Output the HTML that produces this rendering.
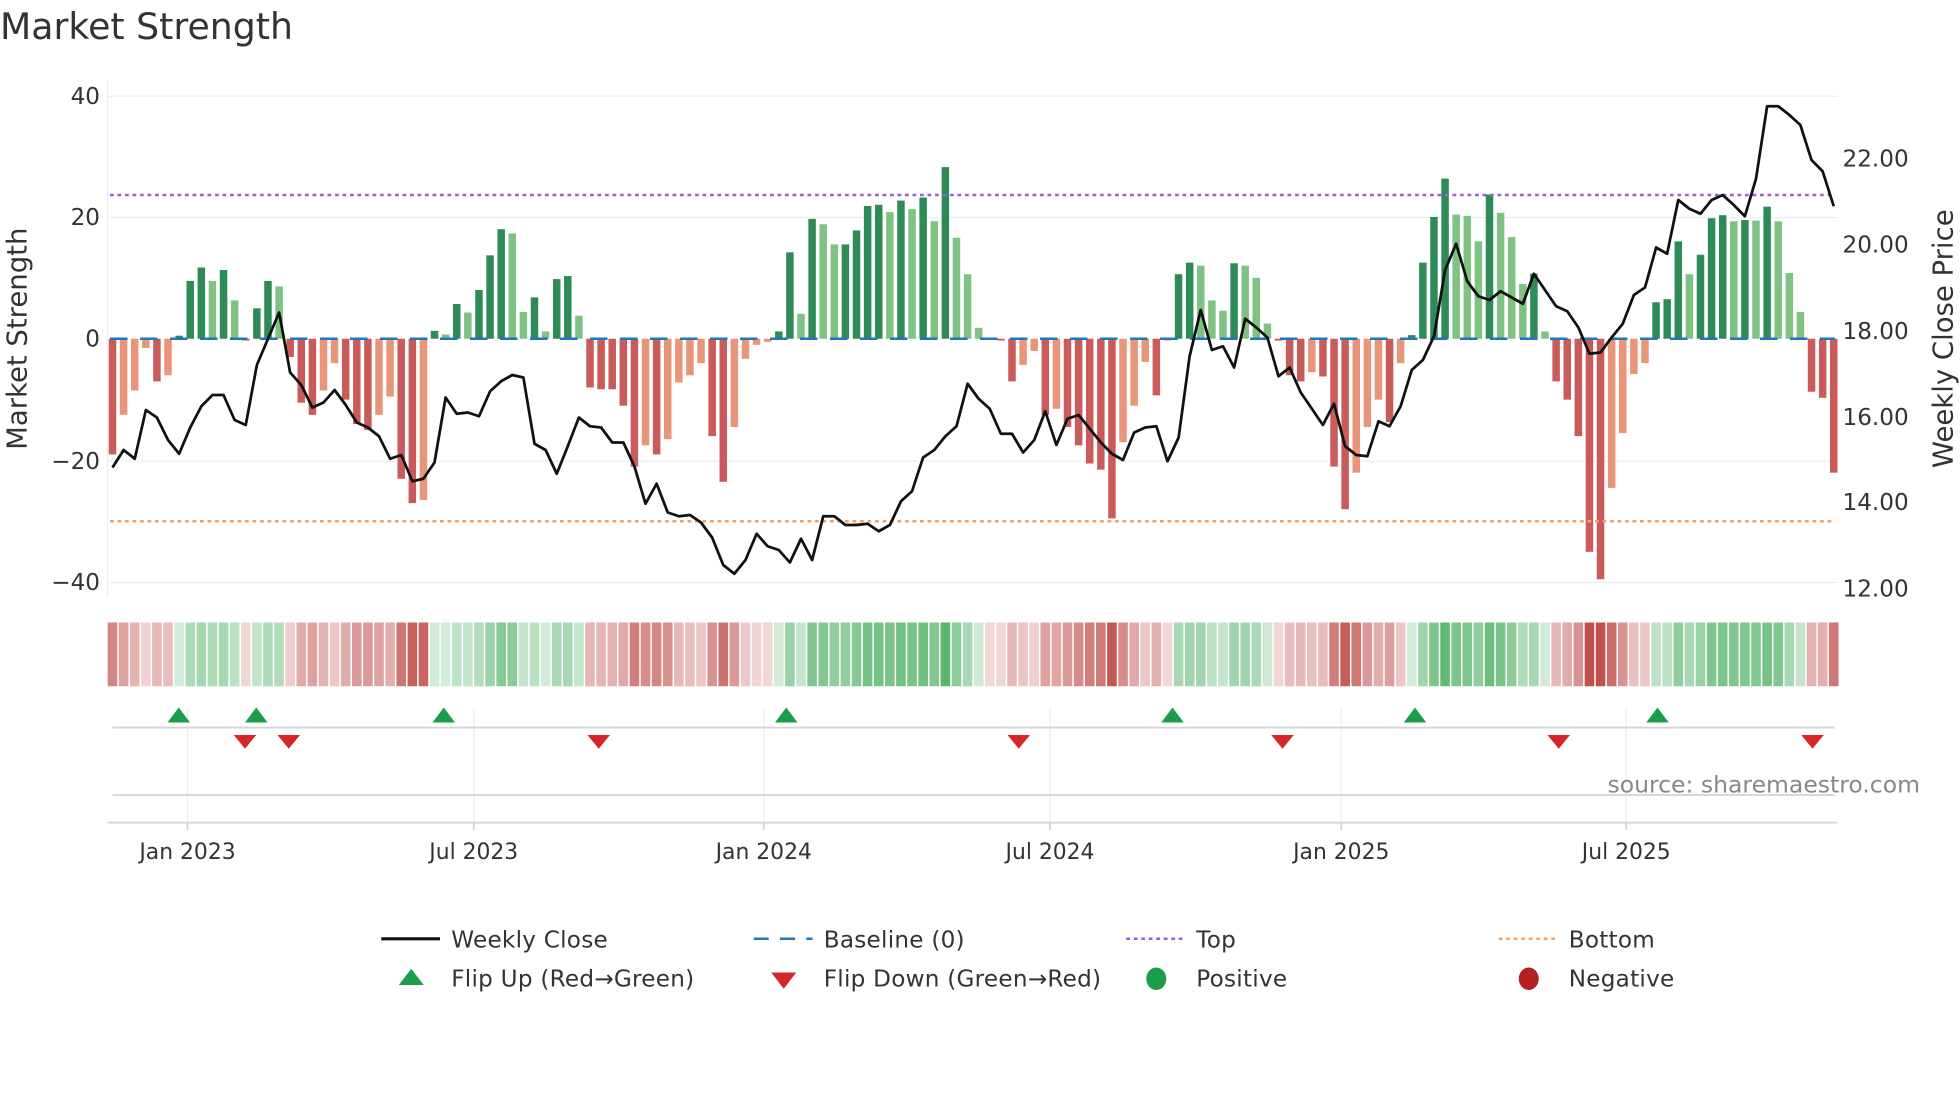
<!DOCTYPE html>
<html><head><meta charset="utf-8"><style>
html,body{margin:0;padding:0;background:#fff;}
svg{display:block;font-family:"DejaVu Sans","Liberation Sans",sans-serif;}
</style></head><body>
<svg id="s" width="1960" height="1102" viewBox="0 0 1568 881.6" xmlns="http://www.w3.org/2000/svg">
<rect width="1568" height="882" fill="#fff"/>
<text x="0" y="31" font-size="29" fill="#333">Market Strength</text>
<g stroke="#eceef2" stroke-width="1">
<line x1="86" x2="1470" y1="77" y2="77"/><line x1="86" x2="1470" y1="174" y2="174"/>
<line x1="86" x2="1470" y1="369" y2="369"/><line x1="86" x2="1470" y1="466" y2="466"/>
<line x1="86" x2="86" y1="65" y2="478"/>
</g>
<g font-size="18.5" fill="#333" text-anchor="end">
<text x="80" y="83">40</text><text x="80" y="180">20</text><text x="80" y="277">0</text>
<text x="80" y="375">−20</text><text x="80" y="472">−40</text>
</g>
<g font-size="18.5" fill="#333">
<text x="1474" y="133">22.00</text><text x="1474" y="202">20.00</text><text x="1474" y="271">18.00</text>
<text x="1474" y="340">16.00</text><text x="1474" y="408">14.00</text><text x="1474" y="477">12.00</text>
</g>
<text transform="translate(21,271) rotate(-90)" text-anchor="middle" font-size="22" fill="#333">Market Strength</text>
<text transform="translate(1562,271) rotate(-90)" text-anchor="middle" font-size="22" fill="#333">Weekly Close Price</text>
<g id="bars"></g>
<line x1="88" x2="1468" y1="271" y2="271" stroke="#1f77b4" stroke-width="2" stroke-dasharray="14,10"/>
<line x1="88" x2="1468" y1="156" y2="156" stroke="#9b5de5" stroke-width="2" stroke-dasharray="3,3"/>
<line x1="88" x2="1468" y1="417" y2="417" stroke="#f4a261" stroke-width="2" stroke-dasharray="3,3"/>
<polyline id="price" fill="none" stroke="#111" stroke-width="2.2" stroke-linejoin="round"/>
<g id="strip"></g>
<g stroke="#eceef2" stroke-width="1">
<line x1="150" x2="150" y1="566" y2="658"/><line x1="379" x2="379" y1="566" y2="658"/>
<line x1="611" x2="611" y1="566" y2="658"/><line x1="840" x2="840" y1="566" y2="658"/>
<line x1="1073" x2="1073" y1="566" y2="658"/><line x1="1301" x2="1301" y1="566" y2="658"/>
</g>
<line x1="90" x2="1468" y1="582" y2="582" stroke="#d4d6da" stroke-width="1.5"/>
<line x1="90" x2="1468" y1="636" y2="636" stroke="#d4d6da" stroke-width="1.5"/>
<line x1="86" x2="1470" y1="658" y2="658" stroke="#d4d6da" stroke-width="1.5"/>
<g stroke="#d4d6da" stroke-width="1.5">
<line x1="150" x2="150" y1="658" y2="664"/><line x1="379" x2="379" y1="658" y2="664"/>
<line x1="611" x2="611" y1="658" y2="664"/><line x1="840" x2="840" y1="658" y2="664"/>
<line x1="1073" x2="1073" y1="658" y2="664"/><line x1="1301" x2="1301" y1="658" y2="664"/>
</g>
<g id="flips"></g>
<text x="1536" y="634" text-anchor="end" font-size="18.8" fill="#888">source: sharemaestro.com</text>
<g font-size="17.5" fill="#333" text-anchor="middle">
<text x="150" y="687">Jan 2023</text><text x="379" y="687">Jul 2023</text><text x="611" y="687">Jan 2024</text>
<text x="840" y="687">Jul 2024</text><text x="1073" y="687">Jan 2025</text><text x="1301" y="687">Jul 2025</text>
</g>
<g font-size="18.5" fill="#333" letter-spacing="0.2">
<line x1="305" x2="352" y1="751" y2="751" stroke="#111" stroke-width="2.5"/>
<text x="361" y="758">Weekly Close</text>
<line x1="603" x2="650" y1="751" y2="751" stroke="#1f77b4" stroke-width="2" stroke-dasharray="12,9"/>
<text x="659" y="758">Baseline (0)</text>
<line x1="901" x2="946" y1="751" y2="751" stroke="#9b5de5" stroke-width="2" stroke-dasharray="3,3"/>
<text x="957" y="758">Top</text>
<line x1="1199" x2="1244" y1="751" y2="751" stroke="#f4a261" stroke-width="2" stroke-dasharray="3,3"/>
<text x="1255" y="758">Bottom</text>
<polygon points="319,788 329,775 339,788" fill="#1a9e4a"/>
<text x="361" y="789">Flip Up (Red→Green)</text>
<polygon points="617,778 637,778 627,791" fill="#d62728"/>
<text x="659" y="789">Flip Down (Green→Red)</text>
<ellipse cx="925" cy="783" rx="8" ry="9" fill="#1a9e4a"/>
<text x="957" y="789">Positive</text>
<ellipse cx="1223" cy="783" rx="8" ry="9" fill="#b22222"/>
<text x="1255" y="789">Negative</text>
</g>
</svg>
<script>
var v=[-19,-12.5,-8.5,-1.5,-7,-6,0.5,9.5,11.7,9.5,11.3,6.3,-0.3,5,9.5,8.6,-3,-10.5,-12.5,-8.5,-4,-10,-14,-15,-12.5,-9.5,-23,-27,-26.5,1.3,0.7,5.7,4.3,8,13.7,18,17.3,4.4,6.8,1.2,9.8,10.3,3.8,-8,-8.3,-8.3,-11,-21,-17.5,-19,-16.5,-7.2,-6,-4,-16,-23.5,-14.5,-3.3,-1,-0.5,1.2,14.2,4.1,19.7,18.8,15.5,15.5,17.8,21.8,22,20.8,22.7,21.3,23.2,19.3,28.2,16.6,10.6,1.8,-0.1,-0.3,-7,-4.3,-2,-12.5,-11.5,-14.5,-17.5,-20.5,-21.5,-29.5,-17,-11,-3.8,-9.3,-0.3,10.6,12.5,12,6.3,4.6,12.4,12,10,2.5,-0.3,-6,-7,-5.5,-6.2,-21,-28,-22,-14.5,-10,-13.7,-4,0.6,12.5,20,26.3,20.4,20.2,16,23.7,20.7,16.7,9,10.7,1.2,-7,-10,-16,-35,-39.5,-24.5,-15.5,-5.8,-4,6,6.5,16,10.6,13.8,19.8,20.3,19.3,19.5,19.4,21.7,19.3,10.8,4.4,-8.7,-9.7,-22];
var py=[374,360,367,328,334,352,363,342,325,316,316,336,340,292,271,250,298,308,326,322,312,324,338,342,349,367,364,385,383,370,318,331,330,333,313,305,300,302,355,360,379,357,334,341,342,354,354,373,403,387,410,413,412,418,430,452,459,448,427,437,440,450,431,448,413,413,420,420,419,425,420,401,393,366,360,349,341,307,319,327,347,347,362,352,329,356,335,332,343,354,363,368,346,342,341,369,350,285,248,280,277,294,255,262,270,301,294,314,327,340,323,357,364,365,337,341,325,296,288,269,216,195,225,237,240,233,238,243,219,232,245,249,262,283,282,270,259,236,230,198,203,160,167,171,160,156,164,173,143,85,85,92,100,128,137,165];
var NS="http://www.w3.org/2000/svg";
function el(t,a,p){var e=document.createElementNS(NS,t);for(var k in a)e.setAttribute(k,a[k]);p.appendChild(e);return e;}
var n=v.length,x0=90,dx=(1467-90)/(n-1);
var bars=document.getElementById('bars'),strip=document.getElementById('strip');
var pts=[];
for(var i=0;i<n;i++){
 var x=x0+i*dx,val=v[i],prev=i?v[i-1]:0,h=Math.abs(val)*4.87,c;
 if(val>=0){c=(val>=prev)?'#2e8b57':'#7fc284';el('rect',{x:x-3,y:271-h,width:6,height:h,fill:c},bars);}
 else{c=(val<=prev)?'#c95b5b':'#e8957a';el('rect',{x:x-3,y:271,width:6,height:h,fill:c},bars);}
 var a=Math.min(1,0.22+Math.abs(val)/40);
 el('rect',{x:x-dx/2+0.6,y:498,width:dx-1.2,height:51,fill:val>=0?'#4caf62':'#c0504d','fill-opacity':a.toFixed(2)},strip);
 pts.push(x.toFixed(1)+','+py[i]);
}
document.getElementById('price').setAttribute('points',pts.join(' '));
var f=document.getElementById('flips');
[143,205,355,629,938,1132,1326].forEach(function(x){el('polygon',{points:(x-9)+',578 '+x+',566 '+(x+9)+',578',fill:'#1a9e4a'},f);});
[196,231,479,815,1026,1247,1450].forEach(function(x){el('polygon',{points:(x-9)+',588 '+(x+9)+',588 '+x+',599',fill:'#d62728'},f);});
</script>
</body></html>
